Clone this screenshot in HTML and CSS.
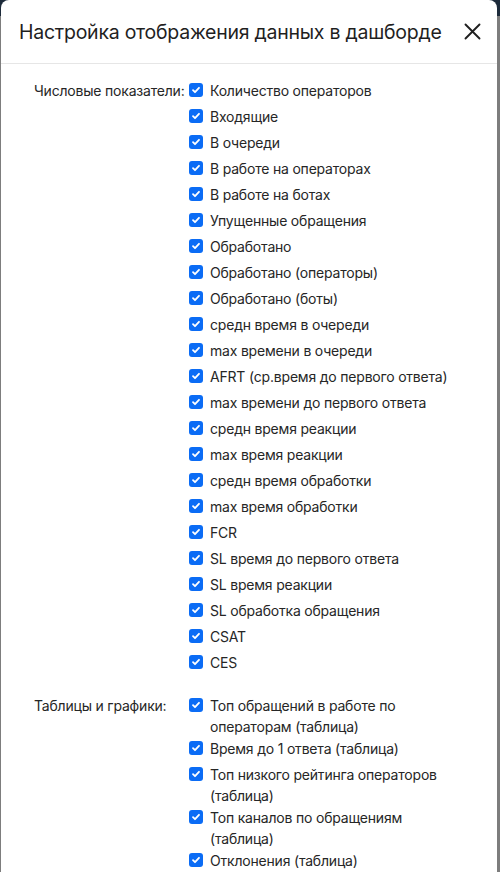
FILE: index.html
```html
<!DOCTYPE html>
<html lang="ru">
<head>
    <meta charset="UTF-8">
    <meta name="viewport" content="width=device-width, initial-scale=1.0">
    <title>Настройка отображения данных в дашборде</title>
    <link rel="stylesheet" href="styles.css">
</head>
<body>
    <div class="modal">
        <div class="modal-header">
            <h2>Настройка отображения данных в дашборде</h2>
            <button type="button" class="close" aria-label="Закрыть">
                <svg width="17" height="17" viewBox="0 0 17 17"><path d="M1.5 1.5L15.5 15.5M15.5 1.5L1.5 15.5" stroke="#1f1f1f" stroke-width="1.9" stroke-linecap="round"/></svg>
            </button>
        </div>

        <div class="modal-body">
            <!-- Numbers -->
            <div class="group">
                <div class="group-label">Числовые показатели:</div>
                <div class="options">
                    <label class="option"><span class="box"></span>Количество операторов</label>
                    <label class="option"><span class="box"></span>Входящие</label>
                    <label class="option"><span class="box"></span>В очереди</label>
                    <label class="option"><span class="box"></span>В работе на операторах</label>
                    <label class="option"><span class="box"></span>В работе на ботах</label>
                    <label class="option"><span class="box"></span>Упущенные обращения</label>
                    <label class="option"><span class="box"></span>Обработано</label>
                    <label class="option"><span class="box"></span>Обработано (операторы)</label>
                    <label class="option"><span class="box"></span>Обработано (боты)</label>
                    <label class="option"><span class="box"></span>средн время в очереди</label>
                    <label class="option"><span class="box"></span>max времени в очереди</label>
                    <label class="option"><span class="box"></span>AFRT (ср.время до первого ответа)</label>
                    <label class="option"><span class="box"></span>max времени до первого ответа</label>
                    <label class="option"><span class="box"></span>средн время реакции</label>
                    <label class="option"><span class="box"></span>max время реакции</label>
                    <label class="option"><span class="box"></span>средн время обработки</label>
                    <label class="option"><span class="box"></span>max время обработки</label>
                    <label class="option"><span class="box"></span>FCR</label>
                    <label class="option"><span class="box"></span>SL время до первого ответа</label>
                    <label class="option"><span class="box"></span>SL время реакции</label>
                    <label class="option"><span class="box"></span>SL обработка обращения</label>
                    <label class="option"><span class="box"></span>CSAT</label>
                    <label class="option"><span class="box"></span>CES</label>
                </div>
            </div>

            <!-- Tables and charts -->
            <div class="group">
                <div class="group-label">Таблицы и графики:</div>
                <div class="options">
                    <label class="option"><span class="box"></span><span>Топ обращений в работе по операторам (таблица)</span></label>
                    <label class="option"><span class="box"></span><span>Время до 1 ответа (таблица)</span></label>
                    <label class="option"><span class="box"></span><span>Топ низкого рейтинга операторов (таблица)</span></label>
                    <label class="option"><span class="box"></span><span>Топ каналов по обращениям (таблица)</span></label>
                    <label class="option"><span class="box"></span><span>Отклонения (таблица)</span></label>
                </div>
            </div>
        </div>
    </div>
</body>
</html>
```

FILE: styles.css
```css
html, body {
    height: 100%;
}
body {
    font-family: Inter, 'Noto Sans', sans-serif;
    margin: 0;
    padding: 0;
    background: linear-gradient(#1c2a3a 0, #1c2a3a 16px, #7d7d7d 16px);
    color: #262626;
    overflow: hidden;
}
.modal {
    margin-left: 1px;
    width: 496px;
    min-height: 100%;
    background: #fff;
    border-radius: 8px 8px 0 0;
}
.modal-header {
    height: 63px;
    padding: 0 15px 0 18px;
    display: flex;
    align-items: center;
    justify-content: space-between;
    border-bottom: 1px solid #e6e6e6;
}
.modal-header h2 {
    margin: 0;
    font-size: 19.5px;
    font-weight: 400;
    color: #1f1f1f;
    letter-spacing: -0.25px;
}
.close {
    border: none;
    background: none;
    padding: 0;
    width: 20px;
    height: 20px;
    display: flex;
    align-items: center;
    justify-content: center;
    cursor: pointer;
}
.modal-body {
    padding: 16px 28px 0 33px;
}
.group {
    display: flex;
    margin-bottom: 18px;
    font-size: 14px;
    line-height: 21px;
    letter-spacing: -0.2px;
}
.group-label {
    width: 155px;
    flex-shrink: 0;
    color: #262626;
}
.options {
    display: flex;
    flex-direction: column;
    gap: 1px;
    flex: 1;
}
.option {
    display: flex;
    align-items: flex-start;
    min-height: 25px;
    color: #262626;
}
.box {
    width: 14px;
    height: 14px;
    margin: 3px 7px 0 0;
    flex-shrink: 0;
    border-radius: 3px;
    background: #0b6cf5 url("data:image/svg+xml;utf8,<svg xmlns='http://www.w3.org/2000/svg' width='14' height='14' viewBox='0 0 14 14'><path d='M4 7.2L6 9.2L10 4.8' fill='none' stroke='white' stroke-width='1.8' stroke-linecap='round' stroke-linejoin='round'/></svg>") center no-repeat;
}
```
